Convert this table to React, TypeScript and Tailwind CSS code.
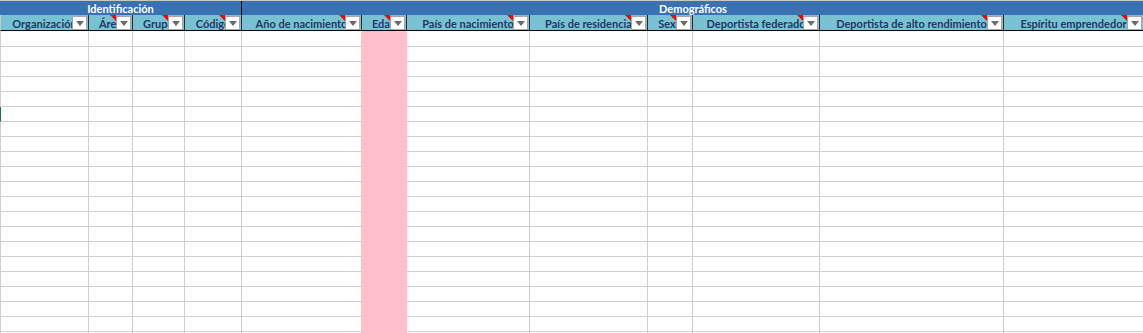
const columns = [
  { name: 'Organización', width: 89, comment: false },
  { name: 'Área', width: 44, comment: true },
  { name: 'Grupo', width: 52, comment: true },
  { name: 'Código', width: 57, comment: true },
  { name: 'Año de nacimiento', width: 120, comment: true },
  { name: 'Edad', width: 45, comment: true },
  { name: 'País de nacimiento', width: 123, comment: true },
  { name: 'País de residencia', width: 118, comment: true },
  { name: 'Sexo', width: 45, comment: true },
  { name: 'Deportista federado', width: 127, comment: true },
  { name: 'Deportista de alto rendimiento', width: 184, comment: true },
  { name: 'Espíritu emprendedor', width: 140, comment: true },
]

const PINK_COL = 5
const ROWS = 21

function FilterButton() {
  return (
    <div className="absolute right-px top-px flex h-[14px] w-[15px] items-center justify-center border border-[#a6a6a6] bg-white">
      <svg width="8" height="5" viewBox="0 0 8 5">
        <polygon points="0,0 8,0 4,5" fill="#6b6b6b" />
      </svg>
    </div>
  )
}

function HeaderCell({ name, comment, first }: { name: string; comment: boolean; first: boolean }) {
  return (
    <div
      className={`relative h-[16px] overflow-hidden border-b border-r border-b-black border-r-[#2a2a2a] bg-[#78c2d3] ${first ? 'border-l border-l-[#c8c8c8]' : ''}`}
    >
      <div className="flex h-[15px] items-center justify-center whitespace-nowrap pt-px text-[11px] font-bold leading-none text-[#1f3864]">
        {name}
      </div>
      {comment && (
        <div className="absolute right-[16px] top-0 h-0 w-0 border-l-[6px] border-t-[6px] border-l-transparent border-t-[#ff0000]" />
      )}
      <FilterButton />
    </div>
  )
}

function App() {
  const grid = columns.map((c) => `${c.width}px`).join(' ')

  return (
    <div className="h-[333px] w-[1143px] overflow-hidden bg-white font-['Lato',sans-serif]">
      <div className="grid border-t border-[#c8c8c8]" style={{ gridTemplateColumns: grid }}>
        <div className="col-span-4 flex h-[14px] items-center justify-center border-r border-black bg-[#3a71b1] text-[11px] font-bold leading-none text-white">
          Identificación
        </div>
        <div className="col-span-8 flex h-[14px] items-center justify-center bg-[#3a71b1] text-[11px] font-bold leading-none text-white">
          Demográficos
        </div>

        {columns.map((c, i) => (
          <HeaderCell key={c.name} name={c.name} comment={c.comment} first={i === 0} />
        ))}

        {Array.from({ length: ROWS }).map((_, r) =>
          columns.map((c, i) => {
            const pink = i === PINK_COL
            const beforePink = i === PINK_COL - 1
            return (
              <div
                key={`${r}-${c.name}`}
                className={`${r === 0 ? 'h-[16px]' : 'h-[15px]'} border-b border-r ${
                  pink
                    ? 'border-[#ffc0cb] bg-[#ffc0cb]'
                    : beforePink
                      ? 'border-b-[#d0d0d0] border-r-[#ffc0cb] bg-white'
                      : 'border-[#d0d0d0] bg-white'
                } ${i === 0 ? (r === 5 ? 'border-l border-l-[#217346]' : 'border-l border-l-[#d0d0d0]') : ''}`}
              />
            )
          })
        )}
      </div>
    </div>
  )
}

export default App
